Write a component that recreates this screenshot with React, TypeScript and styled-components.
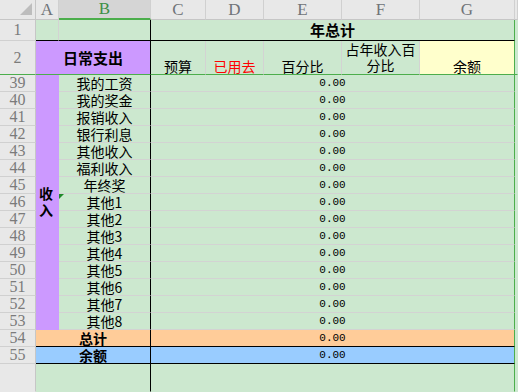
import React from 'react';
import styled, { createGlobalStyle } from 'styled-components';

const GlobalStyle = createGlobalStyle`
  html, body {
    margin: 0;
    padding: 0;
    background: #cce8cf;
  }
`;

const GREEN = '#cce8cf';
const GRID = '#d3d3d3';
const FREEZE = '#4cae4c';
const BLACK = '#000000';

const Sheet = styled.div`
  display: grid;
  grid-template-columns: 36px 23px 92px 55px 58px 78px 78px 95px 3px;
  grid-template-rows: 20px 21px 34px repeat(17, 17px) 1fr;
  width: 518px;
  height: 392px;
  overflow: hidden;
  background: ${GREEN};
  font-family: "Noto Sans CJK SC", sans-serif;
`;

const Corner = styled.div`
  grid-row: 1;
  grid-column: 1;
  display: flex;
  justify-content: flex-end;
  align-items: flex-end;
  padding: 0 3px 4px 0;
  box-sizing: border-box;
  background: #e8e8e8;
  border-right: 1px solid #c6c6c6;
  border-bottom: 1px solid #c6c6c6;
`;

const CornerMark = styled.div`
  width: 0;
  height: 0;
  border-left: 12px solid transparent;
  border-bottom: 12px solid #bdbdbd;
`;

const ColHeader = styled.div<{ $col: number; $active?: boolean }>`
  grid-row: 1;
  grid-column: ${p => p.$col};
  display: flex;
  align-items: center;
  justify-content: center;
  box-sizing: border-box;
  background: ${p => (p.$active ? '#d5d5d5' : '#e8e8e8')};
  border-right: 1px solid #d0d0d0;
  border-bottom: ${p => (p.$active ? `2px solid ${FREEZE}` : '1px solid #c6c6c6')};
  font-family: "Liberation Serif", serif;
  font-size: 17px;
  line-height: 18px;
  color: ${p => (p.$active ? '#3d8f46' : '#707478')};
`;

const RowHeader = styled.div<{ $row: number; $line?: string }>`
  grid-column: 1;
  grid-row: ${p => p.$row};
  display: flex;
  align-items: center;
  justify-content: center;
  box-sizing: border-box;
  background: #e8e8e8;
  border-right: 1px solid #c6c6c6;
  border-bottom: 1px solid ${p => p.$line ?? '#d0d0d0'};
  font-family: "Liberation Serif", serif;
  font-size: 16px;
  line-height: 16px;
  color: #7b7b7b;
`;

const Cell = styled.div<{
  $col: number;
  $span?: number;
  $row: number;
  $rows?: number;
  $bg?: string;
  $right?: string;
  $bottom?: string;
  $x?: string;
  $y?: string;
  $flag?: boolean;
}>`
  position: relative;
  grid-column: ${p => p.$col} / span ${p => p.$span ?? 1};
  grid-row: ${p => p.$row} / span ${p => p.$rows ?? 1};
  display: flex;
  justify-content: ${p => p.$x ?? 'center'};
  align-items: ${p => p.$y ?? 'center'};
  box-sizing: border-box;
  min-width: 0;
  min-height: 0;
  background: ${p => p.$bg ?? GREEN};
  border-right: 1px solid ${p => p.$right ?? GRID};
  border-bottom: 1px solid ${p => p.$bottom ?? GRID};

  ${p =>
    p.$flag &&
    `
    &::before {
      content: '';
      position: absolute;
      top: 0;
      left: 0;
      border-top: 5px solid #1f8a2a;
      border-right: 5px solid transparent;
    }
  `}
`;

const Label = styled.span<{ $bold?: boolean; $size?: number; $color?: string }>`
  font-size: ${p => p.$size ?? 14}px;
  font-weight: ${p => (p.$bold ? 700 : 400)};
  color: ${p => p.$color ?? '#000'};
  line-height: 16px;
  white-space: nowrap;
`;

const Wrapped = styled.span`
  font-size: 14px;
  line-height: 16px;
  padding-bottom: 1px;
  text-align: center;
  color: #000;
`;

const Vertical = styled.span`
  width: 14px;
  margin-left: 3px;
  font-size: 14px;
  font-weight: 700;
  line-height: 17px;
  color: #000;
  word-break: break-all;
`;

const Amount = styled.span`
  font-family: "Liberation Mono", monospace;
  font-size: 11px;
  line-height: 16px;
  color: #000;
`;

const incomes = [
  '我的工资',
  '我的奖金',
  '报销收入',
  '银行利息',
  '其他收入',
  '福利收入',
  '年终奖',
  '其他1',
  '其他2',
  '其他3',
  '其他4',
  '其他5',
  '其他6',
  '其他7',
  '其他8',
];

const letters = ['A', 'B', 'C', 'D', 'E', 'F', 'G'];

const heads = [
  { col: 4, text: '预算', color: '#000' },
  { col: 5, text: '已用去', color: '#ff0000' },
  { col: 6, text: '百分比', color: '#000' },
];

const totals = [
  { row: 19, num: 54, text: '总计', bg: '#ffcc99' },
  { row: 20, num: 55, text: '余额', bg: '#99ccff' },
];

export default function App() {
  return (
    <>
      <GlobalStyle />
      <Sheet>
        <Corner>
          <CornerMark />
        </Corner>
        {letters.map((l, i) => (
          <ColHeader key={l} $col={i + 2} $active={l === 'B'}>
            {l}
          </ColHeader>
        ))}
        <ColHeader $col={9} />

        {/* row 1 */}
        <RowHeader $row={2}>1</RowHeader>
        <Cell $col={2} $row={2} $bottom={BLACK} />
        <Cell $col={3} $row={2} $right={BLACK} $bottom={BLACK} />
        <Cell $col={4} $span={5} $row={2} $right={FREEZE} $bottom={BLACK}>
          <Label $bold $size={15}>年总计</Label>
        </Cell>

        {/* row 2 */}
        <RowHeader $row={3} $line={FREEZE}>2</RowHeader>
        <Cell $col={2} $span={2} $row={3} $bg="#cc99ff" $right={BLACK} $bottom={FREEZE}>
          <Label $bold $size={15}>日常支出</Label>
        </Cell>
        {heads.map(h => (
          <Cell key={h.col} $col={h.col} $row={3} $bottom={FREEZE} $y="flex-end">
            <Label $color={h.color}>{h.text}</Label>
          </Cell>
        ))}
        <Cell $col={7} $row={3} $bottom={FREEZE} $y="flex-end">
          <Wrapped>占年收入百分比</Wrapped>
        </Cell>
        <Cell $col={8} $row={3} $bg="#ffffcc" $right={FREEZE} $bottom={FREEZE} $y="flex-end">
          <Label>余额</Label>
        </Cell>
        <Cell $col={9} $row={3} $right={GREEN} $bottom={FREEZE} />

        {/* rows 39-53 */}
        <Cell $col={2} $row={4} $rows={15} $bg="#cc99ff" $right="#cc99ff" $bottom="#cc99ff" $x="flex-start">
          <Vertical>收入</Vertical>
        </Cell>
        {incomes.map((name, i) => (
          <React.Fragment key={name}>
            <RowHeader $row={i + 4}>{39 + i}</RowHeader>
            <Cell $col={3} $row={i + 4} $right={BLACK} $flag={i === 7}>
              <Label>{name}</Label>
            </Cell>
            <Cell $col={4} $span={5} $row={i + 4} $right={FREEZE}>
              <Amount>0.00</Amount>
            </Cell>
          </React.Fragment>
        ))}

        {/* totals */}
        {totals.map(t => (
          <React.Fragment key={t.num}>
            <RowHeader $row={t.row}>{t.num}</RowHeader>
            <Cell $col={2} $span={2} $row={t.row} $bg={t.bg} $right={BLACK} $bottom={BLACK}>
              <Label $bold>{t.text}</Label>
            </Cell>
            <Cell $col={4} $span={5} $row={t.row} $bg={t.bg} $right={FREEZE} $bottom={BLACK}>
              <Amount>0.00</Amount>
            </Cell>
          </React.Fragment>
        ))}

        {/* empty rest of the sheet */}
        <RowHeader $row={21} $line="#e8e8e8" />
        <Cell $col={2} $span={2} $row={21} $right={BLACK} $bottom={GREEN} />
        <Cell $col={4} $span={5} $row={21} $right={FREEZE} $bottom={GREEN} />
      </Sheet>
    </>
  );
}
